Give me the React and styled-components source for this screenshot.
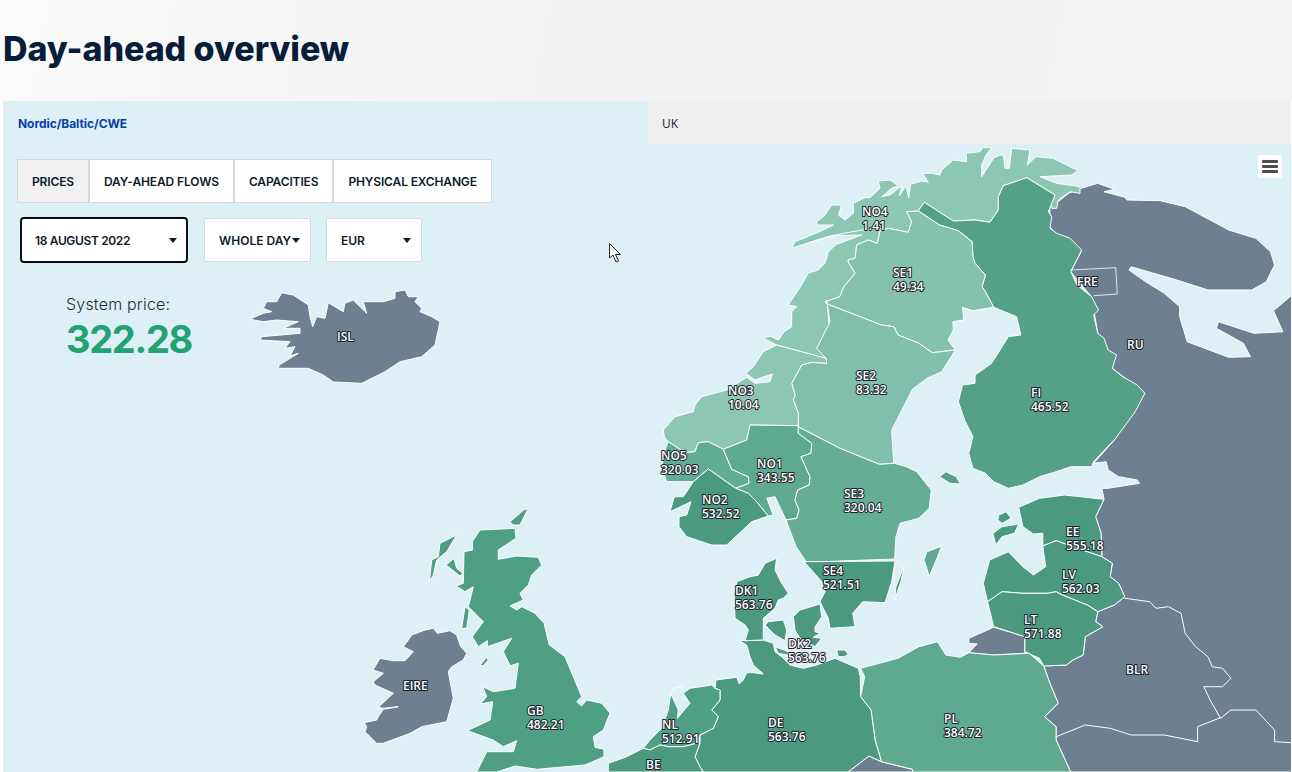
import React from 'react';
import styled, { createGlobalStyle } from 'styled-components';

const GlobalStyle = createGlobalStyle`
  html, body {
    margin: 0;
    background: #fff;
    overflow: hidden;
  }
`;

// map outlines were traced from crops of the picture, each crop has its own origin and scale
const frame = (ox, oy, sx, sy) => (s) =>
  s.trim().split(/\s+/).map((p) => {
    const [x, y] = p.split(',').map(Number);
    return `${(ox + x * sx).toFixed(1)},${(oy + y * sy).toFixed(1)}`;
  }).join(' ');

const n = frame(640, 100, 1 / 2.403, 1 / 3);
const s = frame(640, 420, 1 / 2.403, 1 / 3);
const w = frame(350, 500, 1 / 3, 1 / 3);
const ice = frame(0, 0, 1 / 3, 1 / 3);
const k = frame(720, 550, 1 / 3, 1 / 3);
const t = frame(790, 145, 1 / 3, 1 / 3);
const v = frame(655, 270, 1 / 3, 1 / 3);
const b = frame(600, 660, 1 / 3, 1 / 3);

const GREY = '#6c8092';
const NO_N = '#8bc7b3';
const SE_1 = '#85c2ae';
const SE_2 = '#80bfab';
const FI = '#55a188';
const SE_3 = '#66ad96';
const NO_1 = '#5fa991';
const NO_5 = '#62ab94';
const DEEP = '#4b9a80';
const GB = '#4f9f85';
const PL = '#5fa990';

const AREAS = [
  // Russia, Belarus, Ukraine in one shape, borders drawn later
  { fill: GREY, points: n(`985,310 1005,305 1030,280 1060,265 1100,250 1140,268 1115,275 1165,292 1170,300 1250,302 1310,320 1415,390 1480,415 1515,455 1525,495 1505,545 1470,570 1365,570 1290,540 1180,500 1175,510 1215,545 1260,580 1297,620 1297,650 1315,725 1415,772 1467,770 1450,730 1385,685 1390,665 1475,700 1545,695 1522,632 1567,585`) + ' ' + s(`1567,1056 1035,1056 1000,960 1000,920 972,890 1005,850 985,790 970,738 1025,735 1040,720 1065,705 1070,650 1112,620 1095,605 1100,575 1140,555 1165,530 1150,490 1130,470 1135,430 1110,410 1108,340 1095,290 1115,238 1110,205 1125,205 1200,190 1195,180 1150,170 1125,150 1120,125 1090,130`) + ' ' + n(`1140,1020 1213,880 1135,805 1100,700 1085,590 1035,515 1060,455 1000,405 985,380`) },
  { fill: GREY, points: s(`790,655 850,622 900,640 925,650 925,700 850,705 790,698 810,672 790,670`) },
  { fill: GREY, points: s(`500,1056 550,1008 580,1025 655,1048 655,1056`) },
  { fill: GREY, points: ice(`755,955 790,940 815,935 790,925 800,905 830,905 845,878 880,885 925,915 930,950 938,980 950,950 975,955 985,908 1030,935 1035,910 1060,900 1100,940 1090,905 1115,905 1150,905 1185,895 1185,875 1215,870 1225,890 1255,890 1245,905 1265,925 1260,935 1295,950 1320,965 1305,1035 1265,1070 1200,1085 1155,1115 1085,1150 1000,1146 970,1125 925,1105 835,1105 838,1095 895,1060 870,1068 885,1040 855,1045 870,1025 780,1020 785,1010 900,1000 900,985 850,985 895,965 830,960 790,965 760,960`) },
  { fill: GREY, points: w(`72,505 90,475 130,482 165,482 190,455 160,440 175,420 185,405 225,390 250,385 262,400 300,392 320,405 332,440 350,460 340,480 305,500 295,515 310,595 290,665 215,680 180,700 100,730 80,730 45,695 50,680 42,668 80,660 85,650 100,628 145,620 100,625 85,622 130,580 75,555 70,545 100,520 70,510`) },

  // Norway north + Finland + Sweden
  { fill: NO_N, points: t(`5,310 15,290 85,262 130,240 85,240 78,232 105,210 125,180 155,180 145,210 165,225 190,205 190,175 225,158 240,158 270,130 265,108 300,105 325,122 305,130 275,155 300,150 325,130 335,125 328,152 348,122 356,160 362,118 395,108 415,112 398,85 425,85 450,90 455,75 490,45 530,50 528,25 570,20 578,8 605,8 588,30 575,60 575,95 612,38 630,30 640,30 645,70 658,70 665,10 720,15 712,60 738,35 790,40 850,70 865,75 845,90 750,95 800,115 870,125 870,145 840,140 805,165 800,190 785,190 780,175 795,150 710,98 640,122 625,155 625,195 600,232 555,225 490,228 403,172 385,198 350,200 365,230 355,262 295,250 270,258 262,295 235,285 200,300 195,340 175,345`) + ' ' + n(`500,485 517,520 490,560 480,590 445,605 450,615 455,680 425,745 447,775`) + ' ' + v(`420,240 365,225 325,205 345,198 370,210 388,185 410,170 410,125 425,110 400,105 430,60 460,10`) + ' ' + t(`84,375 105,355 115,320 140,298 215,270 125,272 60,292`) },
  { fill: FI, points: t(`403,172 490,228 555,225 600,232 625,195 625,155 640,122 710,98 795,150 775,200 785,215 780,250 800,265 840,280 875,315`) + ' ' + n(`1035,515 1050,555 1085,590 1102,630 1090,645 1100,700 1115,715 1125,750 1145,765 1135,805 1160,830 1195,855 1213,880 1190,935 1140,1020`) + ' ' + s(`1120,85 1090,125 1085,140 1035,140 1000,155 960,170 920,195 885,205 850,185 830,160 800,145 790,100 800,50 780,0`) + ' ' + n(`765,905 775,855 805,850 805,825 845,790 885,710 915,705 905,650 850,622 830,575 822,560 830,525 805,490 800,470 798,425 765,392 720,375`) + ' ' + t(`385,198`) },
  { fill: FI, points: s(`720,170 735,155 760,170 770,192 745,190`) },
  { fill: SE_1, points: t(`385,198`) + ' ' + n(`720,375 765,392 798,425 800,470 805,490 830,525 822,560 830,575 850,622 820,628 800,632 775,622 778,660 752,665 753,690 740,720 758,750 702,758 670,730 620,705 610,680 580,675 450,612 445,605 480,590 490,560 517,520 500,485`) + ' ' + t(`175,345 195,340 200,300 235,285 262,295 270,258 295,250 355,262 365,230 350,200`) },
  { fill: SE_2, points: n(`450,612 580,675 610,680 620,705 670,730 702,758 758,750 725,815 690,835 655,867 605,990`) + ' ' + s(`605,40 610,130 575,133 480,85 380,20`) + ' ' + v(`430,465 430,430 415,390 420,375 410,340 440,285 470,277 515,280 513,265 485,235 525,155 515,90`) },
  { fill: NO_N, points: v(`365,225 420,240 513,265 515,280 470,277 440,285 410,340 420,375 415,390 430,430 430,467 285,465 275,510 205,538 160,515 130,518 120,545 90,548 40,515 28,500 25,480 60,440 115,425 120,405 140,380 215,360 275,322 300,340 345,335 352,312 300,330 272,310 295,290 325,245`) },
  { fill: NO_5, points: v(`40,515 90,548 120,545 130,518 160,515 205,538 230,598 280,620 282,640 242,655 160,597 115,635 35,635 20,590 30,540`) },
  { fill: NO_1, points: v(`205,538 275,510 285,465 430,467 430,490 470,520 468,550 438,560 465,620 463,645 428,660 420,690 432,720 425,745 393,750 360,680 335,685 355,735 340,738 300,690 280,670 242,655 282,640 280,620 230,598`) },
  { fill: DEEP, points: v(`160,597 242,655 280,670 300,690 340,738 290,755 215,825 170,825 95,800 72,770 72,740 95,735 108,695 45,725 58,680 85,680 115,635`) },
  { fill: SE_3, points: s(`380,20 480,85 575,133 612,130 640,140 665,155 700,210 695,265 670,295 625,310 615,350 612,417 400,427 375,380`) + ' ' + v(`393,750 425,745 432,720 420,690 428,660 463,645 465,620 438,560 468,550 470,520 430,490 430,467`) },
  { fill: DEEP, points: k(`253,35 525,33 515,95 495,158 428,155 398,190 405,230 330,235 325,205 300,155 315,125 305,95`) },
  { fill: DEEP, points: s(`635,437 628,480 612,540 615,500`) },
  { fill: NO_1, points: s(`725,378 712,420 695,470 688,440 682,420 690,395`) },

  // Baltics
  { fill: DEEP, points: s(`910,262 960,235 1020,225 1115,238 1095,290 1108,340 1110,410 1050,385 1000,362 968,378 968,340 945,342 920,320`) },
  { fill: DEEP, points: s(`848,340 870,320 910,312 900,340 870,350 855,375 850,350`) },
  { fill: DEEP, points: s(`862,285 880,275 892,295 870,310 860,300`) },
  { fill: DEEP, points: s(`825,490 840,420 885,395 920,440 945,465 975,440 968,378 1000,362 1050,385 1110,410 1135,430 1130,470 1150,490 1165,530 1140,555 1100,575 1075,555 1015,525 1000,515 980,520 920,520 870,515 835,545`) },
  { fill: DEEP, points: s(`835,545 870,515 920,520 980,520 1000,515 1015,525 1075,555 1100,575 1095,605 1112,620 1070,650 1065,705 1040,720 1025,735 970,738 960,715 925,695 925,650 900,640 850,620`) },

  // Central Europe
  { fill: PL, points: s(`530,745 620,715 670,680 715,665 735,705 770,712 790,698 850,705 935,700 970,738 985,790 1005,850 972,890 1000,920 1000,960 1035,1056 655,1056 655,1048 580,1025 565,960 555,870 530,830 540,770`) },
  { fill: DEEP, points: b(`360,90 345,85 348,60 410,52 418,72 430,60 440,38 460,38 490,42`) + ' ' + k(`100,345 90,320 80,285 55,270 75,272 130,270 160,280 165,305 185,320 210,345 250,355 290,345 345,325 415,355 421,380`) + ' ' + s(`530,830 555,870 565,960 580,1025 550,1008 500,1056`) + ' ' + b(`310,336 300,320 285,290 300,250 300,225 340,205 355,170 335,150 360,120`) },
  { fill: DEEP, points: k(`350,300 375,300 385,315 370,320 355,320`) },
  { fill: DEEP, points: k(`170,25 165,60 185,100 205,130 190,145 175,150 165,175 130,205 130,270 75,272 85,240 75,225 45,205 42,130 50,95 90,80 115,75 135,40`) },
  { fill: DEEP, points: k(`145,215 190,210 200,240 195,272 165,255 135,225`) },
  { fill: DEEP, points: k(`220,200 240,180 300,162 305,200 285,232 285,245 300,250 280,262 305,265 285,290 240,265 225,240`) },
  { fill: DEEP, points: k(`165,290 205,305 205,315 175,310`) },
  { fill: GB, points: b(`130,265 150,240 185,205 205,150 212,100 235,150 232,175 270,130 250,100 270,85 335,75 345,85 360,90 360,120 335,150 355,170 340,205 300,225 290,250 250,260 205,260 180,255 150,270`) },
  { fill: DEEP, points: b(`25,336 25,310 80,290 130,265 150,270 180,255 205,260 250,260 290,250 300,250 285,290 300,320 310,336`) },

  // British isles
  { fill: GB, points: w(`390,90 495,85 498,115 445,150 445,178 500,168 565,172 575,195 545,225 535,255 510,280 520,300 480,318 500,330 515,320 555,340 582,370 598,435 645,470 670,530 695,590 680,605 695,618 710,600 755,610 780,640 760,690 730,710 735,742 762,748 762,770 705,795 560,808 495,798 440,816 380,816 410,755 490,755 500,722 460,740 430,720 352,692 420,660 428,605 390,612 410,590 398,560 430,575 495,565 505,490 480,497 460,455 485,415 412,440 412,422 385,440 367,410 400,365 355,320 370,260 345,275 318,258 340,250 342,155 368,150 367,125`) },
  { fill: GB, points: w(`480,65 510,40 520,30 535,25 510,75 490,75`) },
  { fill: GB, points: w(`245,180 265,170 270,130 320,105 290,155 260,180 250,225 238,245`) },
  { fill: GB, points: w(`288,195 312,175 320,205 338,220 330,228`) },
  { fill: GB, points: w(`345,320 358,330 350,385 335,385`) },
  { fill: GB, points: w(`390,495 410,472 415,480 400,497`) },
];

const BORDERS = [
  { points: s(`1165,535 1225,545 1240,565 1270,560 1300,580 1310,640 1335,680 1365,710 1375,740 1400,745 1420,775 1400,800 1355,800 1370,840 1395,895 1420,870 1480,870 1525,930 1525,965 1566,968`) },
  { points: s(`1000,950 1070,915 1130,925 1180,945 1260,945 1340,965 1340,920 1395,893`) },
  { points: n(`1035,510 1143,503 1147,582 1090,587`), faint: true },
  { points: t(`60,292 125,272 215,255 295,250`) },
  { points: b(`212,100 220,85 252,78`) },
];

const LABELS = [
  { x: 862, y: 212, lines: ['NO4', '1.41'] },
  { x: 893, y: 273, lines: ['SE1', '49.34'] },
  { x: 856, y: 376, lines: ['SE2', '83.32'] },
  { x: 728, y: 391, lines: ['NO3', '10.04'] },
  { x: 1031, y: 393, lines: ['FI', '465.52'] },
  { x: 1077, y: 282, lines: ['FRE'] },
  { x: 1127, y: 345, lines: ['RU'] },
  { x: 337, y: 337, lines: ['ISL'] },
  { x: 661, y: 456, lines: ['NO5', '320.03'] },
  { x: 757, y: 464, lines: ['NO1', '343.55'] },
  { x: 702, y: 500, lines: ['NO2', '532.52'] },
  { x: 844, y: 494, lines: ['SE3', '320.04'] },
  { x: 823, y: 571, lines: ['SE4', '521.51'] },
  { x: 1066, y: 532, lines: ['EE', '555.18'] },
  { x: 1062, y: 575, lines: ['LV', '562.03'] },
  { x: 1024, y: 620, lines: ['LT', '571.88'] },
  { x: 735, y: 591, lines: ['DK1', '563.76'] },
  { x: 788, y: 644, lines: ['DK2', '563.76'] },
  { x: 1126, y: 670, lines: ['BLR'] },
  { x: 662, y: 725, lines: ['NL', '512.91'] },
  { x: 768, y: 723, lines: ['DE', '563.76'] },
  { x: 944, y: 719, lines: ['PL', '384.72'] },
  { x: 646, y: 765, lines: ['BE'] },
  { x: 527, y: 711, lines: ['GB', '482.21'] },
  { x: 403, y: 686, lines: ['EIRE'] },
];

const Header = styled.header`
  height: 101px;
  box-sizing: border-box;
  padding: 27px 0 0 3px;
  background: linear-gradient(100deg, #fbfbfb 0%, #f1f1f1 45%, #f2f2f2 100%);
`;

const Title = styled.h1`
  margin: 0;
  font: 800 34px/44px Inter, "Liberation Sans", sans-serif;
  letter-spacing: -0.05px;
  color: #071d3a;
`;

const Panel = styled.section`
  position: relative;
  height: 671px;
  margin: 0 1px 0 3px;
  background: #ddf0f6;
  overflow: hidden;
`;

const MapSvg = styled.svg`
  position: absolute;
  top: 0;
  left: 0;
  width: 1288px;
  height: 671px;
`;

const MapLabel = styled.text`
  font: 600 12px "Open Sans", "Noto Sans", sans-serif;
  fill: #fff;
  stroke: #1a2029;
  stroke-width: 2px;
  stroke-linejoin: round;
  paint-order: stroke;
`;

const Content = styled.div`
  position: relative;
`;

const RegionTabs = styled.div`
  display: grid;
  grid-template-columns: 645px 1fr;
  height: 43px;
`;

const RegionTab = styled.div`
  display: flex;
  align-items: center;
  padding: 2px 0 0 ${(p) => (p.$active ? '15px' : '14px')};
  background: ${(p) => (p.$active ? 'transparent' : '#efefef')};
  color: ${(p) => (p.$active ? '#0a3cab' : '#15233a')};
  font: ${(p) => (p.$active ? '700 12px Inter' : '400 12px "Open Sans"')}, sans-serif;
  letter-spacing: ${(p) => (p.$active ? '-0.05px' : '0')};
`;

const Controls = styled.div`
  display: flex;
  flex-direction: column;
  align-items: flex-start;
  padding: 15px 0 0 14px;
`;

const ViewTabs = styled.div`
  display: flex;
`;

const ViewTab = styled.div`
  display: flex;
  align-items: center;
  height: 44px;
  box-sizing: border-box;
  padding: 0 14px;
  border: 1px solid #d3d9de;
  background: ${(p) => (p.$active ? '#f0f0f0' : '#fff')};
  color: #0d1b2c;
  font: 600 12px Inter, sans-serif;
  letter-spacing: -0.13px;
`;

const Filters = styled.div`
  display: flex;
  align-items: center;
  gap: 15px;
  margin: 14px 0 0 3px;
`;

const Select = styled.div`
  display: flex;
  align-items: center;
  justify-content: space-between;
  box-sizing: border-box;
  width: ${(p) => p.$width}px;
  height: ${(p) => (p.$focused ? '46px' : '44px')};
  margin-right: ${(p) => (p.$focused ? '1px' : '0')};
  padding: ${(p) => (p.$focused ? '0 9px 0 13px' : '0 10px 0 14px')};
  border: ${(p) => (p.$focused ? '2px solid #0b0f14' : '1px solid #d3d9de')};
  border-radius: ${(p) => (p.$focused ? '4px' : '0')};
  background: #fff;
  color: #0d1b2c;
  font: 600 12px Inter, sans-serif;
  letter-spacing: ${(p) => (p.$focused ? '-0.35px' : '0')};
`;

const Caret = styled.span`
  width: 0;
  height: 0;
  border-left: 4.5px solid transparent;
  border-right: 4.5px solid transparent;
  border-top: 5px solid #0d1b2c;
`;

const SystemPrice = styled.div`
  margin: 31px 0 0 49px;
`;

const PriceLabel = styled.div`
  font: 300 16px/20px Inter, sans-serif;
  letter-spacing: 0.2px;
  color: #1b2a3a;
`;

const PriceValue = styled.div`
  margin-top: 3px;
  font: 700 38px/44px Inter, sans-serif;
  letter-spacing: -1.3px;
  color: #22a173;
`;

const ChartMenu = styled.div`
  position: absolute;
  top: 54px;
  right: 9px;
  display: flex;
  flex-direction: column;
  justify-content: center;
  gap: 2px;
  width: 24px;
  height: 23px;
  padding: 0 4px;
  box-sizing: border-box;
  border-radius: 2px;
  background: #fff;
`;

const MenuBar = styled.span`
  display: block;
  height: 3px;
  border-radius: 1px;
  background: #4d4d4d;
`;

const Pointer = styled.svg`
  position: absolute;
  top: 141px;
  left: 605px;
  width: 16px;
  height: 22px;
`;

const VIEW_TABS = ['PRICES', 'DAY-AHEAD FLOWS', 'CAPACITIES', 'PHYSICAL EXCHANGE'];

export default function App() {
  return (
    <>
      <GlobalStyle />
      <Header>
        <Title>Day-ahead overview</Title>
      </Header>
      <Panel>
        <MapSvg viewBox="3 101 1288 671">
          {AREAS.map((a, i) => (
            <polygon key={i} points={a.points} fill={a.fill} stroke="#fff" strokeWidth="1" strokeLinejoin="round" />
          ))}
          {BORDERS.map((l, i) => (
            <polyline key={i} points={l.points} fill="none" stroke="#fff" strokeWidth="1" opacity={l.faint ? 0.8 : 1} />
          ))}
          {LABELS.map((l) => (
            <MapLabel key={l.lines[0]} x={l.x} y={l.y + 4}>
              {l.lines.map((line, i) => (
                <tspan key={line} x={l.x} dy={i ? 14 : 0}>{line}</tspan>
              ))}
            </MapLabel>
          ))}
        </MapSvg>
        <Content>
          <RegionTabs>
            <RegionTab $active>Nordic/Baltic/CWE</RegionTab>
            <RegionTab>UK</RegionTab>
          </RegionTabs>
          <Controls>
            <ViewTabs>
              {VIEW_TABS.map((tab, i) => (
                <ViewTab key={tab} $active={i === 0}>{tab}</ViewTab>
              ))}
            </ViewTabs>
            <Filters>
              <Select $width={168} $focused>18 AUGUST 2022<Caret /></Select>
              <Select $width={107}>WHOLE DAY<Caret /></Select>
              <Select $width={96}>EUR<Caret /></Select>
            </Filters>
            <SystemPrice>
              <PriceLabel>System price:</PriceLabel>
              <PriceValue>322.28</PriceValue>
            </SystemPrice>
          </Controls>
        </Content>
        <ChartMenu>
          <MenuBar />
          <MenuBar />
          <MenuBar />
        </ChartMenu>
        <Pointer viewBox="0 0 16 22">
          <path d="M1.5 1.5 V16 L5 13 L8 20 L10.5 19 L7.5 12.5 H12.5 Z" fill="#fff" stroke="#222" strokeWidth="1" />
        </Pointer>
      </Panel>
    </>
  );
}
